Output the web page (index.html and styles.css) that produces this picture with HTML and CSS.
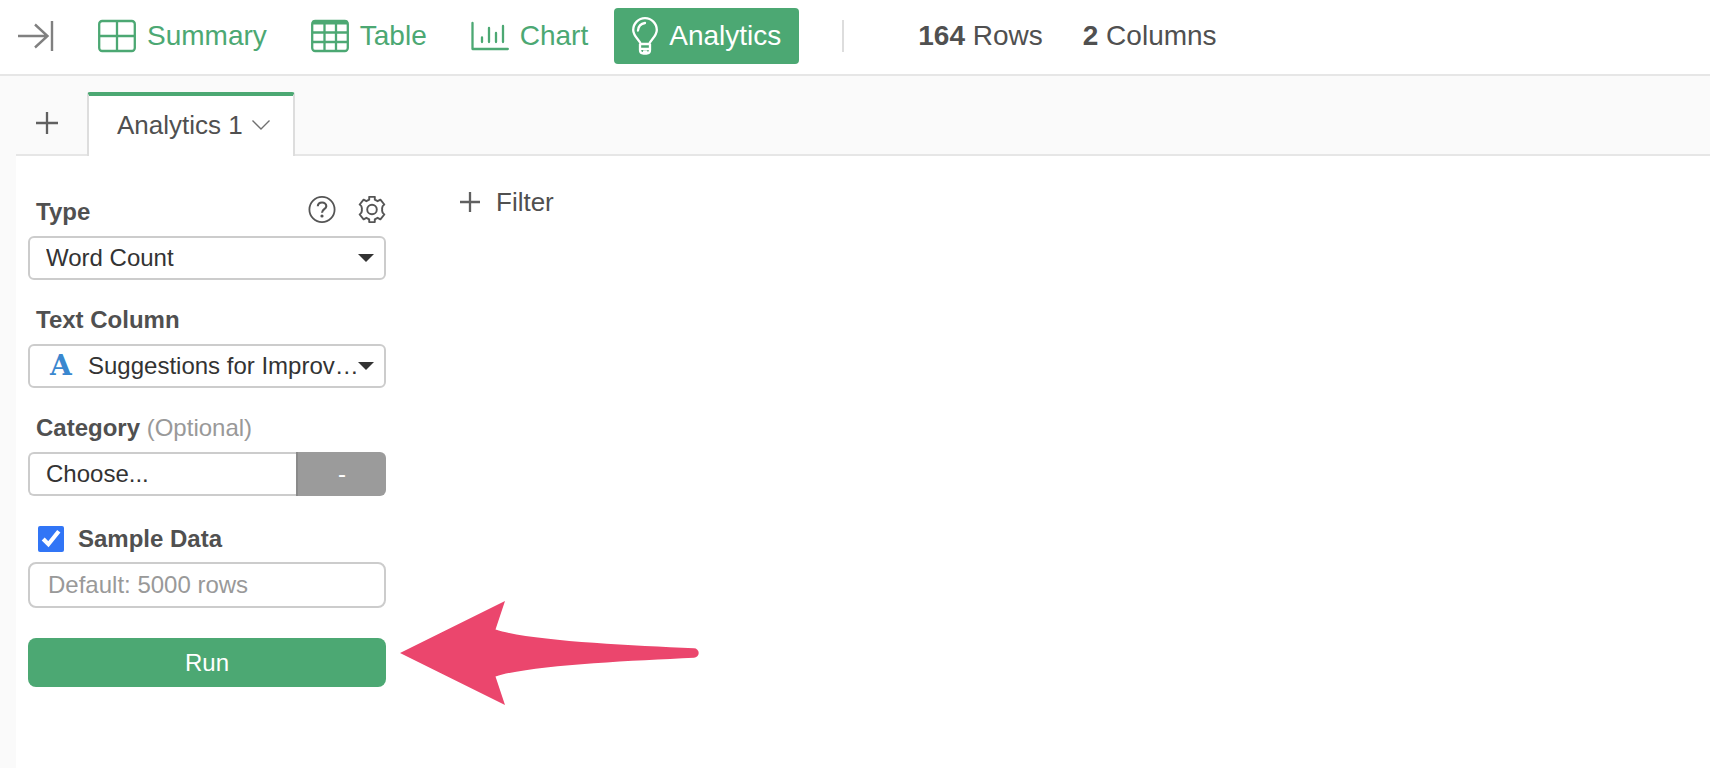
FILE: index.html
```html
<!DOCTYPE html>
<html lang="en">
<head>
    <meta charset="UTF-8">
    <meta name="viewport" content="width=device-width, initial-scale=1.0">
    <title>Analytics</title>
    <link rel="stylesheet" href="styles.css">
</head>
<body>

<header class="toolbar">
    <button class="collapse" type="button" aria-label="Collapse panel">
        <svg width="36" height="30" viewBox="0 0 36 30" fill="none" stroke="#808080" stroke-width="2.400">
            <path d="M0 15h29M17 3.500l12.500 11.500l-12.500 11.500M34 0v30"/>
        </svg>
    </button>
    <nav class="views">
        <a href="#" class="view">
            <svg width="38" height="34" viewBox="0 0 38 34" fill="none" stroke="currentColor" stroke-width="2.300">
                <rect x="1.200" y="2" width="35.600" height="30" rx="3"/>
                <path d="M19 2v30M1 17h36"/>
            </svg>
            Summary
        </a>
        <a href="#" class="view">
            <svg width="38" height="34" viewBox="0 0 38 34" fill="none" stroke="currentColor" stroke-width="2.300">
                <rect x="1.200" y="2" width="35.600" height="30" rx="3"/>
                <path d="M1.500 3.500h35" stroke-width="4"/>
                <path d="M13.500 4v28M25 4v28M1 13.500h36M1 23h36"/>
            </svg>
            Table
        </a>
        <a href="#" class="view">
            <svg width="38" height="34" viewBox="0 0 38 34" fill="none" stroke="currentColor" stroke-width="2.300" stroke-linecap="round" stroke-linejoin="round">
                <path d="M1.500 4v26h35.300M11 18.500v4.500M18 9v14M25 14v9M32 7v16"/>
            </svg>
            Chart
        </a>
        <a href="#" class="view active">
            <svg width="26" height="38" viewBox="0 0 26 38" fill="none" stroke="currentColor" stroke-width="2.300" stroke-linejoin="round" stroke-linecap="round">
                <path d="M8.500 27c0-3-7.300-7.500-7.300-14a11.800 11.800 0 0 1 23.600 0c0 6.500-7.300 11-7.300 14zM8 27v6q0 3.500 3.500 3.500h3q3.500 0 3.500-3.500v-6M8.500 31.800h9M12 34.500h2.500M6 13.500q.5-6.500 7-7.500"/>
            </svg>
            Analytics
        </a>
    </nav>
    <div class="stats">
        <span><b>164</b> Rows</span>
        <span><b>2</b> Columns</span>
    </div>
</header>

<div class="tabs">
    <button class="add-tab" type="button" aria-label="Add tab">
        <svg width="22" height="22" viewBox="0 0 22 22" stroke="#606060" stroke-width="2.300">
            <path d="M0 11h22M11 0v22"/>
        </svg>
    </button>
    <button class="tab" type="button">
        Analytics 1
        <svg width="18" height="10" viewBox="0 0 18 10" fill="none" stroke="#707070" stroke-width="1.400">
            <path d="M.5 .5l8.500 8.500l8.500-8.500"/>
        </svg>
    </button>
</div>

<div class="workspace">
    <form class="settings">
        <div class="field">
            <div class="label-row">
                <label for="type">Type</label>
                <button class="icon-btn" type="button" aria-label="Help">
                    <svg width="28" height="28" viewBox="0 0 28 28" fill="none" stroke="#555" stroke-width="1.800">
                        <circle cx="14" cy="13.500" r="12.600"/>
                        <path d="M9.800 10.200c.2-5 8.600-4.800 8.500 0c-.1 3-4.300 3-4.300 6.500" stroke-width="2.100"/>
                        <circle cx="14" cy="20" r="1.600" fill="#555" stroke="none"/>
                    </svg>
                </button>
                <button class="icon-btn" type="button" aria-label="Settings">
                    <svg width="28" height="28" viewBox="0 0 28 28" fill="none" stroke="#555" stroke-width="1.900" stroke-linejoin="round">
                        <circle cx="14" cy="13.500" r="4.800"/>
                        <path d="M11.200 .9h5.600v2.800l2.800 1.500l2.800-1.500l3.900 4.800q-2.700 1.700-2.100 5q-.6 3.300 2.100 5l-3.900 4.800l-2.800-1.500l-2.800 1.500v2.800h-5.600v-2.800l-2.800-1.500l-2.800 1.500l-3.900-4.800q2.700-1.700 2.100-5q.6-3.300-2.100-5l3.900-4.800l2.800 1.500l2.800-1.500z"/>
                    </svg>
                </button>
            </div>
            <div class="picker">
                <select id="type">
                    <option>Word Count</option>
                </select>
                <svg class="caret" width="16" height="8" viewBox="0 0 16 8"><path d="M0 0h16l-8 8z" fill="#333"/></svg>
            </div>
        </div>

        <div class="field">
            <label for="text-column">Text Column</label>
            <div class="picker with-type">
                <span class="char-type" aria-hidden="true">A</span>
                <select id="text-column">
                    <option>Suggestions for Improv…</option>
                </select>
                <svg class="caret" width="16" height="8" viewBox="0 0 16 8"><path d="M0 0h16l-8 8z" fill="#333"/></svg>
            </div>
        </div>

        <div class="field">
            <label for="category">Category <span class="optional">(Optional)</span></label>
            <div class="choose-group">
                <button id="category" class="choose" type="button">Choose...</button>
                <button class="clear" type="button">-</button>
            </div>
        </div>

        <div class="field sample">
            <div class="check-row">
                <input type="checkbox" id="sample" checked>
                <label for="sample">Sample Data</label>
            </div>
            <input type="text" class="rows" placeholder="Default: 5000 rows" aria-label="Sample rows">
        </div>

        <div class="actions">
            <button class="run" type="button">Run</button>
            <svg class="arrow" width="300" height="104" viewBox="0 0 300 104">
                <path d="M0 52L105 0L95.500 28.500C132 40 226 44 294 47.300A4.700 4.700 0 0 1 294 56.700C226 60 132 64 95.500 75.500L105 104z" fill="#eb466d"/>
            </svg>
        </div>
    </form>

    <main class="result">
        <button class="filter" type="button">
            <svg width="20" height="20" viewBox="0 0 20 20" stroke="#606060" stroke-width="2.300">
                <path d="M0 10h20M10 0v20"/>
            </svg>
            Filter
        </button>
    </main>
</div>

</body>
</html>
```
FILE: styles.css
```css
* {
    box-sizing: border-box;
}
body {
    margin: 0;
    min-height: 100vh;
    display: flex;
    flex-direction: column;
    font-family: "Liberation Sans", Arial, sans-serif;
    font-size: 24px;
    line-height: 28px;
    color: #505050;
    background-color: #fafafa;
}
button, input, select {
    font: inherit;
    color: inherit;
    margin: 0;
}
button {
    padding: 0;
    border: none;
    background: none;
    cursor: pointer;
}
svg {
    display: block;
    flex: none;
}

/* Top toolbar */
.toolbar {
    display: flex;
    align-items: center;
    padding: 8px 18px 10px;
    border-bottom: 2px solid #e6e6e6;
    background-color: #fff;
    font-size: 28px;
    line-height: 32px;
}
.views {
    display: flex;
    margin-left: 26px;
}
.view {
    display: flex;
    align-items: center;
    gap: 11px;
    height: 56px;
    padding: 0 26px 0 18px;
    border-radius: 4px;
    color: #4ca873;
    text-decoration: none;
}
.view.active {
    padding-right: 18px;
    background-color: #4ca873;
    color: #fff;
}
.stats {
    display: flex;
    gap: 40px;
    margin-left: 43px;
    padding-left: 74px;
    border-left: 2px solid #ddd;
}

/* Tabs */
.tabs {
    display: flex;
    margin-left: 16px;
    padding-top: 16px;
    border-bottom: 2px solid #e6e6e6;
}
.add-tab {
    padding: 0 29px 0 20px;
}
.tab {
    display: flex;
    align-items: center;
    gap: 9px;
    height: 64px;
    margin-bottom: -2px;
    padding: 0 23px 2px 28px;
    border: 2px solid #ddd;
    border-top: 4px solid #4ca873;
    border-bottom: none;
    border-radius: 3px 3px 0 0;
    background-color: #fff;
    font-size: 26px;
    line-height: 30px;
}

/* Settings panel */
.workspace {
    flex: 1;
    display: flex;
    margin-left: 16px;
    background-color: #fff;
}
.settings {
    width: 370px;
    padding: 40px 0 40px 12px;
}
.field {
    display: flex;
    flex-direction: column;
    gap: 10px;
    margin-bottom: 26px;
}
.field label {
    padding-left: 8px;
    font-weight: bold;
}
.label-row {
    display: flex;
    gap: 22px;
    height: 30px;
}
.label-row label {
    flex: 1;
    align-self: flex-end;
}
.icon-btn {
    align-self: flex-start;
}
.optional {
    font-weight: normal;
    color: #999;
}
.picker {
    position: relative;
}
.picker select {
    display: block;
    width: 100%;
    height: 44px;
    padding: 0 22px 0 16px;
    border: 2px solid #ccc;
    border-radius: 6px;
    background-color: #fff;
    color: #333;
    appearance: none;
}
.picker.with-type select {
    padding-left: 58px;
}
.caret {
    position: absolute;
    top: 18px;
    right: 12px;
    pointer-events: none;
}
.char-type {
    position: absolute;
    top: 8px;
    left: 22px;
    font-family: "DejaVu Serif", serif;
    font-size: 28px;
    font-weight: bold;
    color: #3a87cf;
    pointer-events: none;
}
.choose-group {
    display: flex;
    height: 44px;
}
.choose {
    flex: 1;
    padding-left: 16px;
    border: 2px solid #ccc;
    border-right: none;
    border-radius: 6px 0 0 6px;
    text-align: left;
    color: #333;
}
.clear {
    width: 90px;
    border-left: 2px solid #8a8a8a;
    border-radius: 0 6px 6px 0;
    background-color: #9b9b9b;
    color: #fff;
}
.sample {
    gap: 8px;
    margin: 28px 0 30px;
}
.check-row {
    display: flex;
    align-items: center;
    gap: 6px;
    height: 30px;
    padding-left: 10px;
}
.check-row input {
    width: 26px;
    height: 26px;
    accent-color: #3175f6;
}
.rows {
    width: 100%;
    height: 46px;
    padding: 0 18px;
    border: 2px solid #ccc;
    border-radius: 8px;
    background-color: #fff;
}
.rows::placeholder {
    color: #999;
}
.actions {
    position: relative;
}
.run {
    width: 100%;
    height: 49px;
    border-radius: 8px;
    background-color: #4ca873;
    color: #fff;
}
.arrow {
    position: absolute;
    top: -37px;
    left: 372px;
}

/* Result area */
.result {
    flex: 1;
    padding: 31px 74px;
}
.filter {
    display: flex;
    align-items: center;
    gap: 16px;
    font-size: 26px;
    line-height: 30px;
}
```
